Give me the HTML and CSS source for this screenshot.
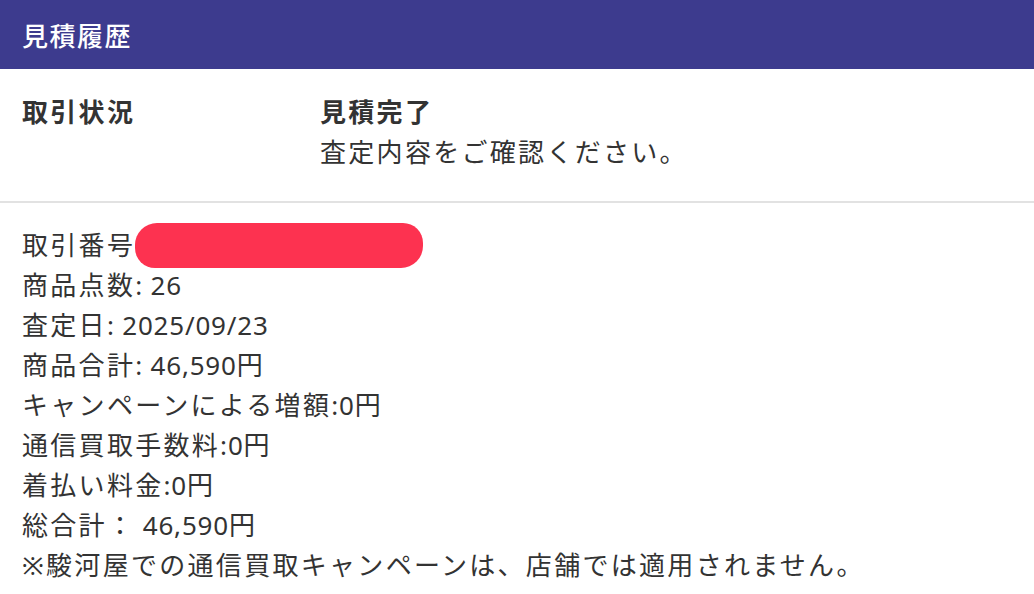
FILE: index.html
```html
<!DOCTYPE html>
<html lang="ja">
<head>
<meta charset="utf-8">
<title>見積履歴</title>
<link rel="stylesheet" href="styles.css">
</head>
<body>
<div class="page">
  <header class="bar">見積履歴</header>
  <section class="status">
    <div class="label">取引状況</div>
    <div class="value">
      <div class="strong">見積完了</div>
      <div>査定内容をご確認ください。</div>
    </div>
  </section>
  <section class="details">
    <div class="line redacted-line">取引番号<span class="en">:</span><span class="redact"></span></div>
    <div class="line">商品点数<span class="en">: 26</span></div>
    <div class="line">査定日<span class="en">: 2025/09/23</span></div>
    <div class="line">商品合計<span class="en">: 46,590</span>円</div>
    <div class="line">キャンペーンによる増額<span class="en">:0</span>円</div>
    <div class="line">通信買取手数料<span class="en">:0</span>円</div>
    <div class="line">着払い料金<span class="en">:0</span>円</div>
    <div class="line">総合計：<span class="en"> 46,590</span>円</div>
    <div class="line">※駿河屋での通信買取キャンペーンは、店舗では適用されません。</div>
  </section>
</div>
</body>
</html>
```

FILE: styles.css
```css
html, body {
  margin: 0;
  padding: 0;
  background: #ffffff;
}

.page {
  font-family: "Noto Sans", "Noto Sans CJK JP", sans-serif;
  font-size: 26px;
  letter-spacing: 2.3px;
  color: #333333;
}

.en {
  letter-spacing: 0.8px;
}

.bar {
  height: 69px;
  background: #3d3b8e;
  color: #ffffff;
  display: flex;
  align-items: center;
  padding: 0 22px;
  font-weight: 500;
  letter-spacing: 1.5px;
}

.status {
  display: grid;
  grid-template-columns: 298px 1fr;
  padding: 23px 22px 29px;
  line-height: 40px;
  border-bottom: 2px solid #e2e2e2;
}

.label,
.strong {
  font-weight: 700;
}

.details {
  padding: 22px 22px;
  line-height: 40px;
}

.redacted-line {
  position: relative;
}

.redact {
  position: absolute;
  left: 113px;
  top: -2px;
  width: 288px;
  height: 45px;
  border-radius: 22px 20px 22px 20px;
  background: #fd3250;
}
```
